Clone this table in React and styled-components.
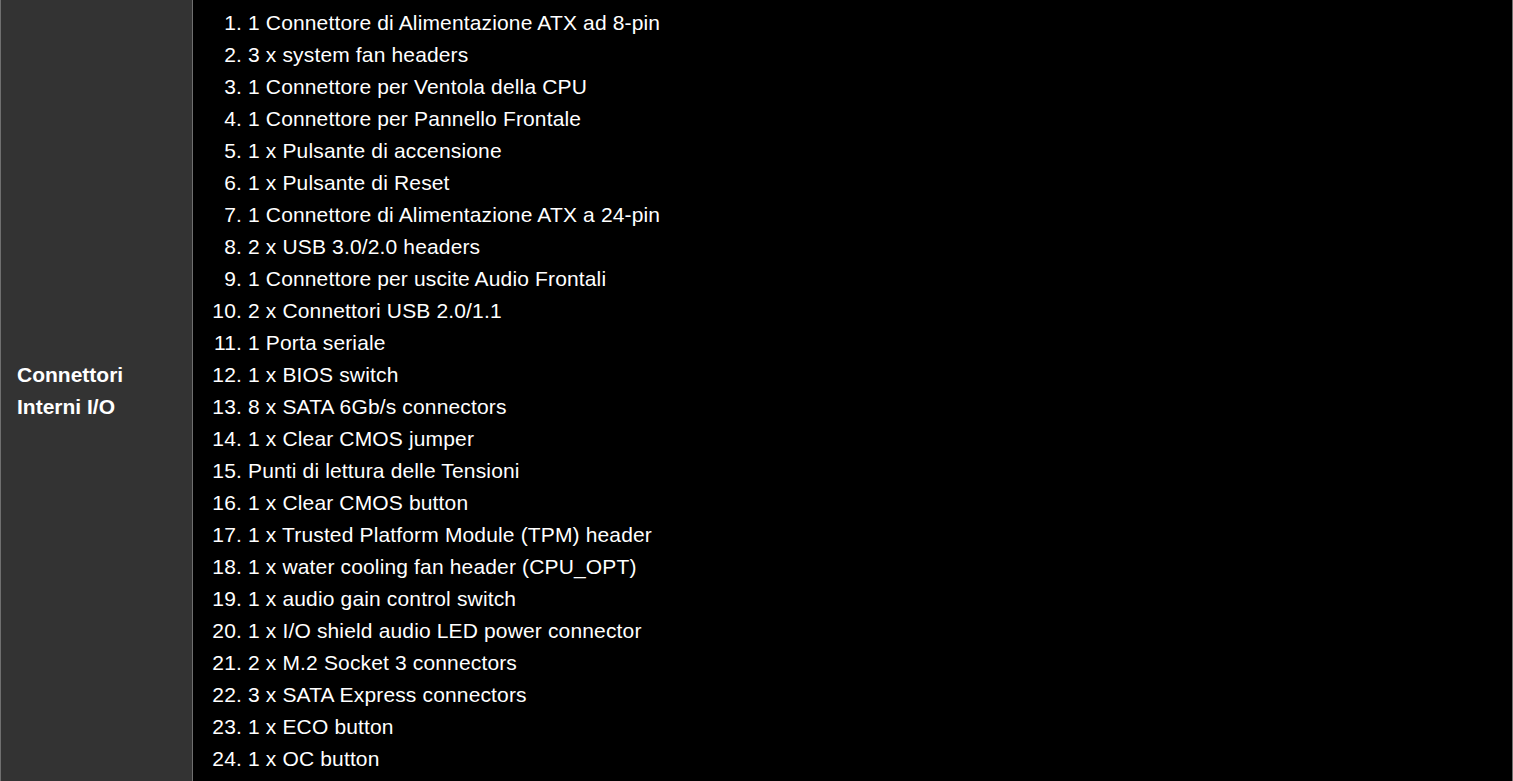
import React from "react";
import styled, { createGlobalStyle } from "styled-components";

const Global = createGlobalStyle`
  html, body { margin: 0; padding: 0; background: #000; }
  body { font-family: "Liberation Sans", Arial, sans-serif; overflow: hidden; }
`;

const Table = styled.div`
  display: grid;
  grid-template-columns: 193px 1fr;
  height: 781px;
  background: #000;
  color: #fff;
  font-size: 21px;
  line-height: 32px;
`;

const LabelCell = styled.div`
  background: #333333;
  border-left: 1px solid #6f6f6f;
  border-right: 1px solid #6f6f6f;
  display: flex;
  align-items: center;
  padding: 0 16px;
  font-weight: bold;
  font-size: 21px;
`;

const ValueCell = styled.div`
  border-right: 1px solid #6f6f6f;
  padding-top: 7px;
`;

const List = styled.ol`
  margin: 0;
  padding-left: 55px;
  letter-spacing: 0.15px;
`;

const Item = styled.li`
  line-height: 32px;
`;

const items = [
  "1 Connettore di Alimentazione ATX ad 8-pin",
  "3 x system fan headers",
  "1 Connettore per Ventola della CPU",
  "1 Connettore per Pannello Frontale",
  "1 x Pulsante di accensione",
  "1 x Pulsante di Reset",
  "1 Connettore di Alimentazione ATX a 24-pin",
  "2 x USB 3.0/2.0 headers",
  "1 Connettore per uscite Audio Frontali",
  "2 x Connettori USB 2.0/1.1",
  "1 Porta seriale",
  "1 x BIOS switch",
  "8 x SATA 6Gb/s connectors",
  "1 x Clear CMOS jumper",
  "Punti di lettura delle Tensioni",
  "1 x Clear CMOS button",
  "1 x Trusted Platform Module (TPM) header",
  "1 x water cooling fan header (CPU_OPT)",
  "1 x audio gain control switch",
  "1 x I/O shield audio LED power connector",
  "2 x M.2 Socket 3 connectors",
  "3 x SATA Express connectors",
  "1 x ECO button",
  "1 x OC button",
];

export default function App() {
  return (
    <>
      <Global />
      <Table>
        <LabelCell>
          <span>
            Connettori
            <br />
            Interni I/O
          </span>
        </LabelCell>
        <ValueCell>
          <List>
            {items.map((t) => (
              <Item key={t}>{t}</Item>
            ))}
          </List>
        </ValueCell>
      </Table>
    </>
  );
}
